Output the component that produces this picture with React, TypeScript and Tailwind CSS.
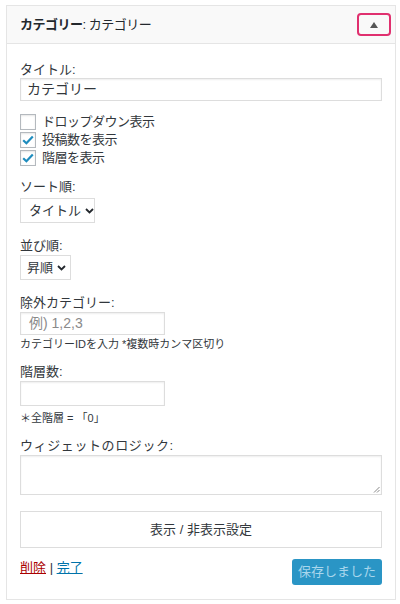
import React from "react";

const Chevron = () => (
  <svg width="9" height="6" viewBox="0 0 9 6" className="ml-[4px] shrink-0">
    <path d="M1 1 L4.5 4.5 L8 1" fill="none" stroke="#23282d" strokeWidth="1.8" />
  </svg>
);

const Check = () => (
  <svg width="12" height="10" viewBox="0 0 12 10">
    <path d="M1.2 5.2 L4.4 8.2 L10.8 1.4" fill="none" stroke="#1e8cbe" strokeWidth="2.2" />
  </svg>
);

const CheckRow = ({ checked, label }: { checked: boolean; label: string }) => (
  <div className="flex items-center h-[18px]">
    <div className="w-[16px] h-[16px] border border-[#b4b9be] bg-white flex items-center justify-center shadow-[inset_0_1px_2px_rgba(0,0,0,0.1)]">
      {checked && <Check />}
    </div>
    <span className="ml-[6px] text-[13px] text-[#32373c] leading-[18px] tracking-[-0.5px]">{label}</span>
  </div>
);

export default function App() {
  return (
    <div className="w-[400px] h-[604px] bg-white pt-[5px] pl-[6px] font-['Liberation_Sans','Noto_Sans_CJK_JP',sans-serif] text-[#32373c]">
      <div className="w-[390px] h-[595px] border border-[#e5e5e5] flex flex-col">
        <div className="h-[38px] bg-[#f9f9f9] border-b border-[#e5e5e5] flex items-center justify-between pl-[13px] pr-[4px]">
          <div className="text-[13px] text-[#23282d] tracking-[-0.5px]">
            <span className="font-bold">カテゴリー</span>
            <span>: カテゴリー</span>
          </div>
          <div className="w-[34px] h-[23px] border-2 border-[#e0306f] rounded-[4px] flex items-center justify-center">
            <svg width="8" height="6" viewBox="0 0 8 6">
              <path d="M0 6 L4 0 L8 6 Z" fill="#555" />
            </svg>
          </div>
        </div>
        <div className="px-[13px] pt-[17px] flex flex-col">
          <div className="text-[13px] leading-[18px]">タイトル:</div>
          <div className="mt-[-1px] h-[23px] border border-[#ddd] shadow-[inset_0_1px_2px_rgba(0,0,0,0.07)] flex items-center px-[6px] text-[14px] text-[#32373c]">
            カテゴリー
          </div>
          <div className="mt-[12px] flex flex-col gap-0">
            <CheckRow checked={false} label="ドロップダウン表示" />
            <CheckRow checked={true} label="投稿数を表示" />
            <CheckRow checked={true} label="階層を表示" />
          </div>
          <div className="mt-[11px] text-[13px] leading-[18px]">ソート順:</div>
          <div className="mt-[2px] w-[75px] h-[25px] border border-[#ddd] flex items-center pl-[8px] text-[13px] text-[#32373c] whitespace-nowrap">
            タイトル
            <Chevron />
          </div>
          <div className="mt-[14px] text-[13px] leading-[18px]">並び順:</div>
          <div className="mt-[0px] w-[51px] h-[25px] border border-[#ddd] flex items-center pl-[6px] text-[13px] text-[#32373c] whitespace-nowrap">
            昇順
            <Chevron />
          </div>
          <div className="mt-[14px] text-[13px] leading-[18px]">除外カテゴリー:</div>
          <div className="mt-[0px] w-[145px] h-[23px] border border-[#ddd] shadow-[inset_0_1px_2px_rgba(0,0,0,0.07)] flex items-center px-[8px] text-[14px] text-[#8a8a8a]">
            例) 1,2,3
          </div>
          <div className="mt-[1px] text-[11px] leading-[16px] text-[#32373c]">カテゴリーIDを入力 *複数時カンマ区切り</div>
          <div className="mt-[11px] text-[13px] leading-[18px]">階層数:</div>
          <div className="mt-[0px] w-[145px] h-[25px] border border-[#ddd] shadow-[inset_0_1px_2px_rgba(0,0,0,0.07)]"></div>
          <div className="mt-[4px] text-[11px] leading-[16px] text-[#32373c]">＊全階層 = 「0」</div>
          <div className="mt-[11px] text-[13px] leading-[18px] tracking-[0.6px]">ウィジェットのロジック:</div>
          <div className="mt-[0px] relative h-[40px] border border-[#ddd] shadow-[inset_0_1px_2px_rgba(0,0,0,0.07)]">
            <svg width="7" height="7" viewBox="0 0 7 7" className="absolute right-[1px] bottom-[1px]">
              <path d="M6.5 1 L1 6.5 M6.5 4 L4 6.5" stroke="#888" strokeWidth="1" />
            </svg>
          </div>
          <div className="mt-[16px] h-[37px] border border-[#ddd] flex items-center justify-center text-[13px] text-[#32373c]">
            表示 / 非表示設定
          </div>
          <div className="mt-[11px] flex items-center justify-between">
            <div className="text-[13px] leading-[18px] mt-[-8px]">
              <span className="text-[#a00] underline">削除</span>
              <span className="text-[#32373c]"> | </span>
              <span className="text-[#0073aa] underline">完了</span>
            </div>
            <div className="w-[90px] h-[26px] rounded-[3px] bg-[#2a95c5] flex items-center justify-center text-[13px] text-[#a8d6ec]">
              保存しました
            </div>
          </div>
        </div>
      </div>
    </div>
  );
}
